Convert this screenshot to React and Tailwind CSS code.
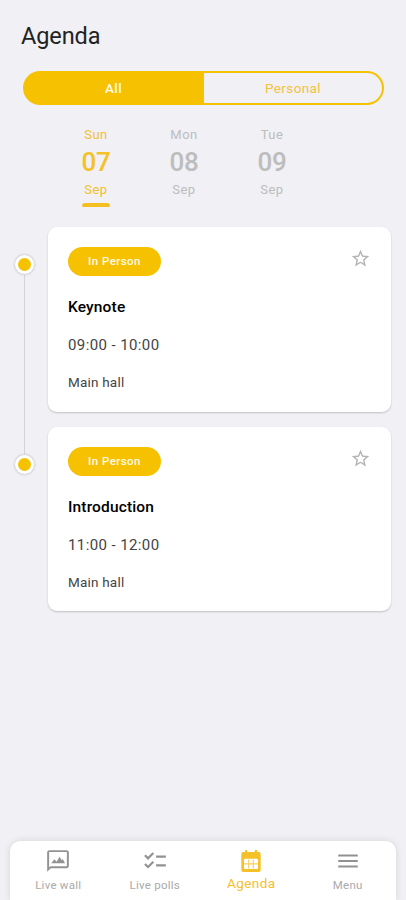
const days = [
  { day: 'Sun', date: '07', month: 'Sep', active: true },
  { day: 'Mon', date: '08', month: 'Sep' },
  { day: 'Tue', date: '09', month: 'Sep' },
];

const sessions = [
  { title: 'Keynote', time: '09:00 - 10:00', place: 'Main hall' },
  { title: 'Introduction', time: '11:00 - 12:00', place: 'Main hall' },
];

function Star() {
  return (
    <svg className="h-[21px] w-[21px] text-[#b3b3b5]" viewBox="0 0 24 24" fill="currentColor">
      <path d="M22 9.24l-7.19-.62L12 2 9.19 8.63 2 9.24l5.46 4.73L5.82 21 12 17.27 18.18 21l-1.63-7.03L22 9.24zM12 15.4l-3.76 2.27 1-4.28-3.32-2.88 4.38-.38L12 6.1l1.71 4.04 4.38.38-3.32 2.88 1 4.28L12 15.4z" />
    </svg>
  );
}

function WallIcon() {
  return (
    <svg className="h-[26px] w-[26px]" viewBox="0 0 24 24" fill="currentColor">
      <path d="M20 2H4c-1.1 0-2 .9-2 2v18l3.400-3.400H20c1.1 0 2-.9 2-2V4c0-1.1-.9-2-2-2zm.2 14.800H4.900L3.800 17.900V3.800h16.400v13z" />
      <path d="M5.700 14l3-3.700 2 2.300 2.800-4.500 1.900 3.200 1-1.100 2.100 3.800z" />
    </svg>
  );
}

function PollsIcon() {
  return (
    <svg className="h-[26px] w-[26px]" viewBox="0 0 24 24" fill="currentColor">
      <path d="M22 7h-9v2h9V7zm0 8h-9v2h9v-2zM5.54 11L2 7.46l1.41-1.41 2.12 2.12 4.24-4.24 1.41 1.41L5.54 11zm0 8L2 15.46l1.41-1.41 2.12 2.12 4.24-4.24 1.41 1.41L5.54 19z" />
    </svg>
  );
}

function CalendarIcon() {
  return (
    <svg className="h-[26px] w-[26px]" viewBox="0 0 26 26">
      <path fill="currentColor" d="M5.300 4H7V2h2.200v2h7.600V2H19v2h1.700a2 2 0 0 1 2 2v16a2 2 0 0 1-2 2H5.300a2 2 0 0 1-2-2V6a2 2 0 0 1 2-2z" />
      <rect x="6" y="10.800" width="14" height="10.200" rx="1" fill="#fff" />
      <path stroke="currentColor" strokeWidth="1.100" d="M6 15.900h14M10.700 11.500v9M15.300 11.500v9" opacity=".75" />
    </svg>
  );
}

function MenuIcon() {
  return (
    <svg className="h-[26px] w-[26px]" viewBox="0 0 24 24" fill="currentColor">
      <path d="M3 18h18v-1.800H3V18zm0-5.100h18v-1.800H3v1.800zM3 6v1.800h18V6H3z" />
    </svg>
  );
}

const tabs = [
  { label: 'Live wall', Icon: WallIcon },
  { label: 'Live polls', Icon: PollsIcon },
  { label: 'Agenda', Icon: CalendarIcon, active: true },
  { label: 'Menu', Icon: MenuIcon },
];

function Session({ session, first }) {
  return (
    <div className="flex">
      <div className="flex w-12 flex-col items-center">
        <div className={first ? 'h-7' : 'h-7 w-px bg-[#d4d4d8]'} />
        <div className="flex h-[19px] w-[19px] shrink-0 items-center justify-center rounded-full bg-white shadow-[0_0_2px_1px_#d0d0d5]">
          <div className="h-[13px] w-[13px] rounded-full bg-[#f6c200]" />
        </div>
        {first && <div className="w-px grow bg-[#d4d4d8]" />}
      </div>
      <div className={first ? 'w-[343px] pb-[15px]' : 'w-[343px]'}>
        <div className={`${first ? 'h-[185px]' : 'h-[184px]'} rounded-[9px] bg-white px-5 pt-[19.500px] shadow-[0_1px_2px_rgba(0,0,0,0.2)]`}>
          <div className="flex items-start justify-between">
            <div className="flex h-[29px] w-[93px] items-center justify-center rounded-full bg-[#f6c200] pt-px text-[11.500px] font-medium tracking-[0.45px] text-[#fffbe9]">
              In Person
            </div>
            <div className="mt-px mr-[0.500px]"><Star /></div>
          </div>
          <h2 className="mt-[21px] text-[15.500px] leading-5 font-medium tracking-[0.15px] text-black">{session.title}</h2>
          <p className="mt-[18px] text-[15px] leading-5 tracking-[0.4px] text-[#444]">{session.time}</p>
          <p className="mt-[17px] text-[13.500px] leading-5 tracking-[0.2px] text-[#444]">{session.place}</p>
        </div>
      </div>
    </div>
  );
}

export default function App() {
  return (
    <div className="flex h-[900px] w-[406px] flex-col overflow-hidden bg-[#f0f0f5] font-[Roboto,sans-serif]">
      <h1 className="mt-5 ml-[21px] text-[23.500px] leading-8 tracking-[-0.1px] text-[#222]">Agenda</h1>
      <div className="mt-[19px] ml-[23px] flex h-[34px] w-[361px] shrink-0 overflow-hidden rounded-full bg-[#f6c200] text-[13.500px] tracking-[0.4px]">
        <div className="flex w-[181px] items-center justify-center font-medium text-[#fffbe9]">All</div>
        <div className="my-0.5 mr-0.5 flex grow items-center justify-center rounded-r-full bg-[#f0f0f5] text-[#f3c240]">Personal</div>
      </div>
      <div className="mt-5 ml-[52px] flex">
        {days.map((d) => (
          <div key={d.date} className={`flex w-[88px] flex-col items-center ${d.active ? 'text-[#f4c127]' : 'text-[#bdbdbd]'}`}>
            <span className="text-[13px] leading-5 tracking-[0.45px]">{d.day}</span>
            <span className="text-[26px] leading-[35px] font-medium tracking-[-0.300px]">{d.date}</span>
            <span className="text-[13px] leading-5 tracking-[0.45px]">{d.month}</span>
            {d.active && <span className="mt-[3px] h-[4px] w-[28px] rounded-t-[3px] rounded-b-[1px] bg-[#f4bf20]" />}
          </div>
        ))}
      </div>
      <div className="mt-5">
        {sessions.map((s, i) => <Session key={s.title} session={s} first={i === 0} />)}
      </div>
      <nav className="mt-auto mr-[10px] ml-[10px] flex h-[59px] rounded-t-[10px] bg-white shadow-[0_0_7px_rgba(0,0,0,0.12)]">
        {tabs.map(({ label, Icon, active }) => (
          <div key={label} className={`flex flex-1 flex-col items-center pt-[7px] ${active ? 'text-[#f5c128]' : 'text-[#929292]'}`}>
            <Icon />
            <span className={active ? 'text-[13.500px] leading-[18px] tracking-[0.45px]' : 'mt-[2px] text-[11.500px] leading-[18px] tracking-[0.25px] text-[#aaa]'}>{label}</span>
          </div>
        ))}
      </nav>
    </div>
  );
}
